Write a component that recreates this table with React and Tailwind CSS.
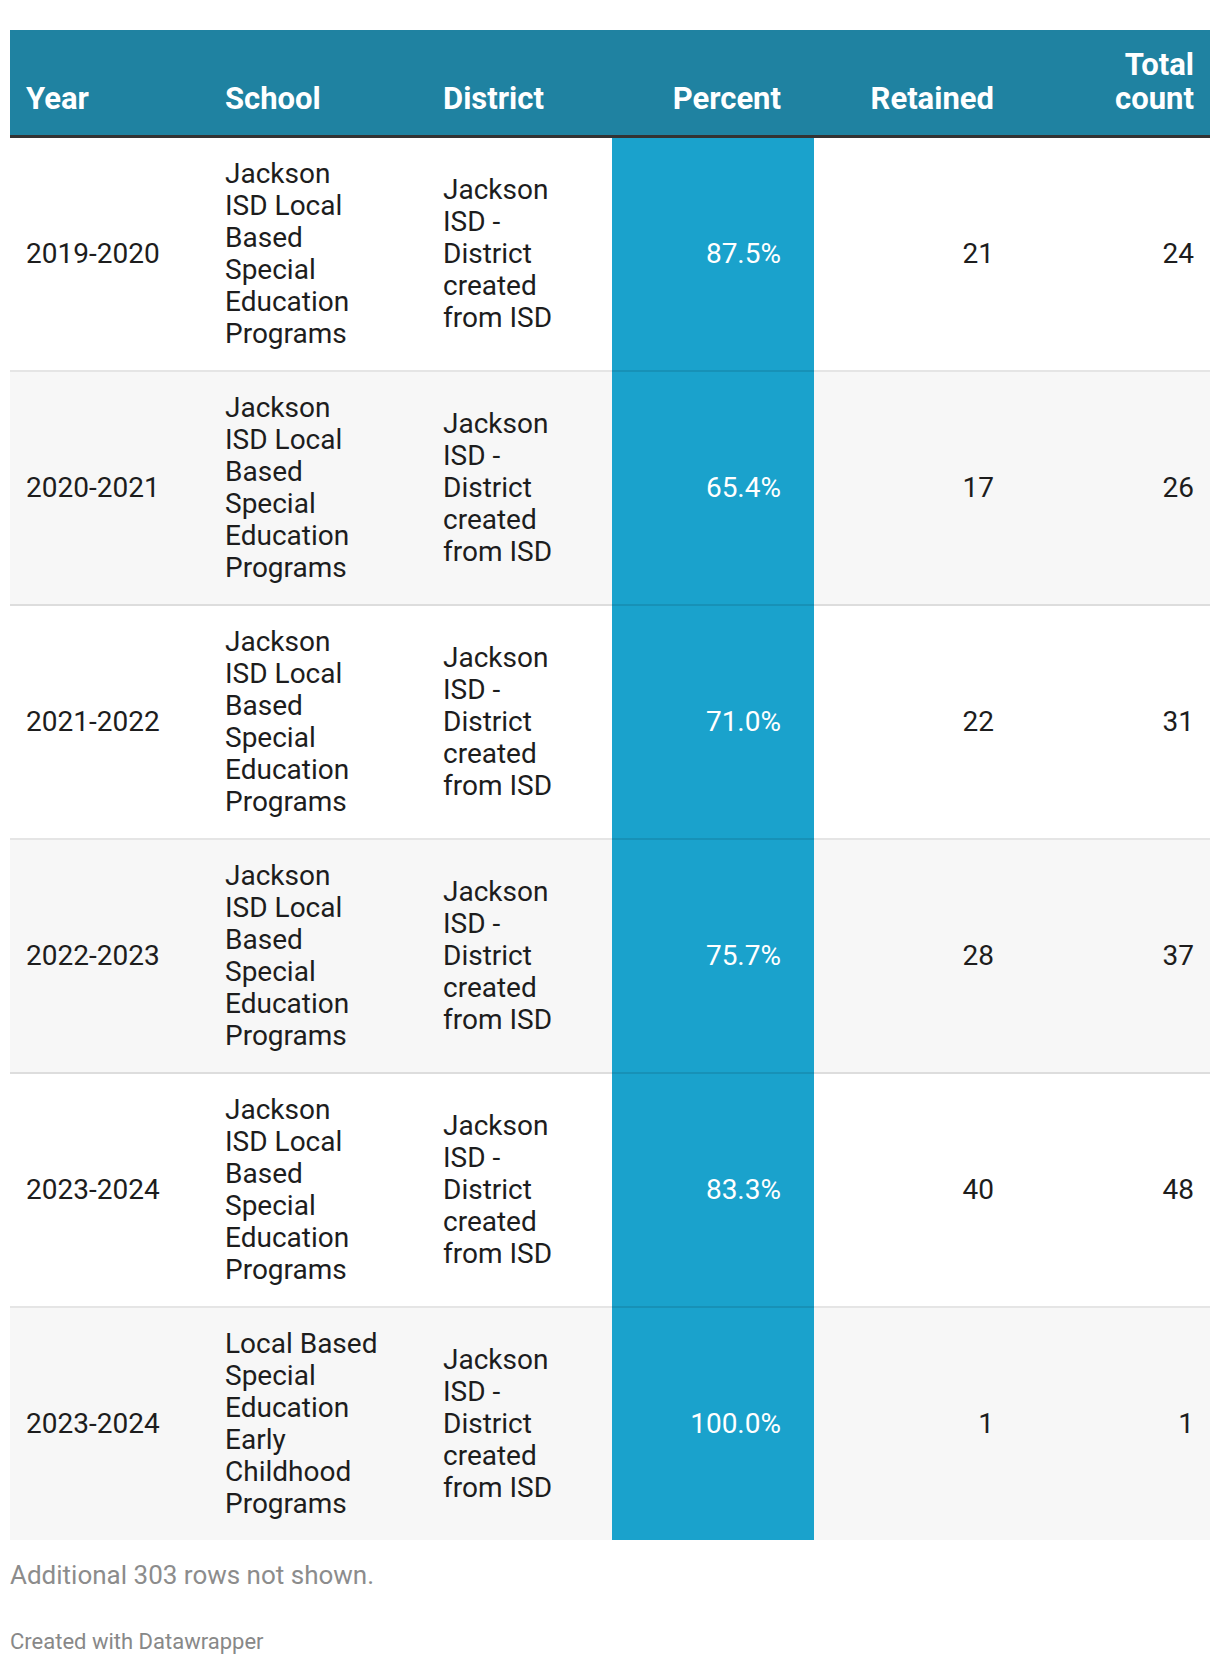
import React from "react";

const rows = [
  { year: "2019-2020", school: ["Jackson", "ISD Local", "Based", "Special", "Education", "Programs"], pct: "87.5%", ret: "21", total: "24" },
  { year: "2020-2021", school: ["Jackson", "ISD Local", "Based", "Special", "Education", "Programs"], pct: "65.4%", ret: "17", total: "26" },
  { year: "2021-2022", school: ["Jackson", "ISD Local", "Based", "Special", "Education", "Programs"], pct: "71.0%", ret: "22", total: "31" },
  { year: "2022-2023", school: ["Jackson", "ISD Local", "Based", "Special", "Education", "Programs"], pct: "75.7%", ret: "28", total: "37" },
  { year: "2023-2024", school: ["Jackson", "ISD Local", "Based", "Special", "Education", "Programs"], pct: "83.3%", ret: "40", total: "48" },
  { year: "2023-2024", school: ["Local Based", "Special", "Education", "Early", "Childhood", "Programs"], pct: "100.0%", ret: "1", total: "1" },
];

const district = ["Jackson", "ISD -", "District", "created", "from ISD"];

export default function App() {
  return (
    <div className="bg-white w-[1220px] min-h-[1666px] px-[10px] pt-[30px]" style={{ fontFamily: "Roboto, 'Liberation Sans', sans-serif" }}>
      {/* Header */}
      <div className="flex bg-[#1f82a1] text-white font-bold text-[31px] leading-[34px] border-b-[3px] border-[#333333]">
        <div className="w-[199px] pl-[16px] pt-[18px] pb-[19px] flex items-end">Year</div>
        <div className="w-[218px] pl-[16px] pt-[18px] pb-[19px] flex items-end">School</div>
        <div className="w-[185px] pl-[16px] pt-[18px] pb-[19px] flex items-end">District</div>
        <div className="w-[202px] pr-[33px] pt-[18px] pb-[19px] flex items-end justify-end">Percent</div>
        <div className="w-[196px] pr-[16px] pt-[18px] pb-[19px] flex items-end justify-end">Retained</div>
        <div className="w-[200px] pr-[16px] pt-[18px] pb-[19px] flex items-end justify-end text-right">
          <span>Total<br />count</span>
        </div>
      </div>

      {/* Body */}
      <div className="text-[28px] leading-[32px] text-[#1d1d1d]">
        {rows.map((r, i) => {
          const last = i === rows.length - 1;
          const border = last ? "" : "border-b-2 border-black/10";
          return (
            <div key={i} className={`flex ${i % 2 === 1 ? "bg-[#f7f7f7]" : "bg-white"}`}>
              <div className={`w-[199px] pl-[16px] py-[20px] flex items-center ${border}`}>{r.year}</div>
              <div className={`w-[218px] pl-[16px] py-[20px] flex flex-col justify-center ${border}`}>
                {r.school.map((s, j) => (
                  <div key={j} className="whitespace-nowrap">{s}</div>
                ))}
              </div>
              <div className={`w-[185px] pl-[16px] py-[20px] flex flex-col justify-center ${border}`}>
                {district.map((s, j) => (
                  <div key={j} className="whitespace-nowrap">{s}</div>
                ))}
              </div>
              <div className={`w-[202px] pr-[33px] py-[20px] flex items-center justify-end bg-[#1aa2cc] text-white ${border}`}>{r.pct}</div>
              <div className={`w-[196px] pr-[16px] py-[20px] flex items-center justify-end ${border}`}>{r.ret}</div>
              <div className={`w-[200px] pr-[16px] py-[20px] flex items-center justify-end ${border}`}>{r.total}</div>
            </div>
          );
        })}
      </div>

      {/* Footer */}
      <div className="mt-[19px] text-[26px] leading-[32px] text-[#8c8c8c]">Additional 303 rows not shown.</div>
      <div className="mt-[37px] text-[22px] leading-[28px] text-[#888888]">Created with Datawrapper</div>
    </div>
  );
}
